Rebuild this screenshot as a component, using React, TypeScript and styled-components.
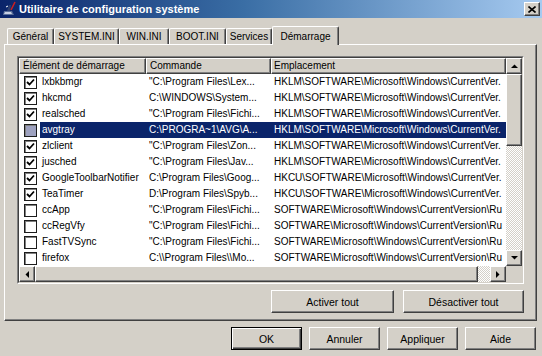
import React from "react";
import styled, { createGlobalStyle, css } from "styled-components";

const GlobalStyle = createGlobalStyle`
  html, body {
    margin: 0;
    padding: 0;
    background: #d4d0c8;
  }
  body {
    font-family: "Liberation Sans", Arial, sans-serif;
    font-size: 10px;
    color: #000;
  }
  * {
    box-sizing: border-box;
  }
`;

// classic 3D edges
const raised = css`
  border: 1px solid;
  border-color: #fff #404040 #404040 #fff;
  box-shadow: inset -1px -1px #808080;
  background: #d4d0c8;
`;

const dither = css`
  background-color: #fff;
  background-image: conic-gradient(
    #d4d0c8 25%,
    transparent 0 50%,
    #d4d0c8 0 75%,
    transparent 0
  );
  background-size: 2px 2px;
`;

const Window = styled.div`
  width: 542px;
  height: 356px;
  display: flex;
  flex-direction: column;
  background: #d4d0c8;
  overflow: hidden;
`;

const TitleBar = styled.div`
  height: 18px;
  display: flex;
  align-items: center;
  gap: 1px;
  padding: 0 2px 0 2px;
  background: linear-gradient(to right, #0a246a 0%, #3a6ea5 45%, #a6caf0 100%);
  color: #fff;
  font-weight: bold;
  font-size: 11px;
`;

const TitleText = styled.span`
  flex: 1;
  white-space: nowrap;
`;

const CloseButton = styled.div`
  ${raised};
  width: 16px;
  height: 14px;
  display: flex;
  align-items: center;
  justify-content: center;
`;

const Main = styled.div`
  flex: 1;
  display: flex;
  flex-direction: column;
  padding: 8px 5px 0 4px;
`;

const TabStrip = styled.div`
  height: 18px;
  display: flex;
  align-items: flex-end;
  padding-left: 3px;
  position: relative;
  z-index: 1;
`;

const Tab = styled.div<{ $width: number; $active?: boolean }>`
  width: ${({ $width }) => $width}px;
  height: ${({ $active }) => ($active ? 19 : 16)}px;
  margin-bottom: ${({ $active }) => ($active ? -1 : 0)}px;
  display: flex;
  justify-content: center;
  padding-top: ${({ $active }) => ($active ? 4 : 2)}px;
  background: #d4d0c8;
  border-top: 1px solid #fff;
  border-left: 1px solid #fff;
  border-right: 1px solid #404040;
  border-radius: 2px 2px 0 0;
  box-shadow: inset -1px 0 #808080;
  white-space: nowrap;
`;

const Panel = styled.div`
  height: 277px;
  display: flex;
  flex-direction: column;
  padding: 11px 12px 7px 12px;
  border: 1px solid;
  border-color: #fff #404040 #404040 #fff;
  box-shadow: inset -1px -1px #808080;
`;

const ListFrame = styled.div`
  height: 228px;
  border: 1px solid;
  border-color: #808080 #fff #fff #808080;
`;

const ListInner = styled.div`
  height: 100%;
  border: 1px solid;
  border-color: #404040 #d4d0c8 #d4d0c8 #404040;
  display: grid;
  grid-template-columns: 1fr 16px;
  grid-template-rows: 1fr 16px;
  background: #fff;
`;

const Table = styled.div`
  overflow: hidden;
  display: flex;
  flex-direction: column;
`;

const columns = "127px 125px 1fr";

const HeaderRow = styled.div`
  display: grid;
  grid-template-columns: ${columns};
  height: 16px;
`;

const HeaderCell = styled.div<{ $pad: number }>`
  ${raised};
  padding-left: ${({ $pad }) => $pad}px;
  line-height: 14px;
  white-space: nowrap;
  overflow: hidden;
`;

const Row = styled.div`
  display: grid;
  grid-template-columns: ${columns};
  height: 16px;
  line-height: 16px;
`;

const NameCell = styled.div`
  display: flex;
  align-items: center;
  padding-left: 5px;
  min-width: 0;
`;

const Label = styled.div<{ $selected?: boolean }>`
  flex: 1;
  height: 16px;
  margin-left: 3px;
  padding-left: 2px;
  white-space: nowrap;
  overflow: hidden;
  background: ${({ $selected }) => ($selected ? "#0a246a" : "transparent")};
  color: ${({ $selected }) => ($selected ? "#fff" : "#000")};
`;

const Cell = styled.div<{ $selected?: boolean }>`
  padding-left: 3px;
  white-space: nowrap;
  overflow: hidden;
  background: ${({ $selected }) => ($selected ? "#0a246a" : "transparent")};
  color: ${({ $selected }) => ($selected ? "#fff" : "#000")};
`;

const CheckBox = styled.div<{ $muted?: boolean }>`
  width: 13px;
  height: 13px;
  flex-shrink: 0;
  border: 1px solid #1c1c1c;
  box-shadow: inset 1px 1px #808080;
  background: ${({ $muted }) => ($muted ? "#9ea2c0" : "#fff")};
  display: flex;
  align-items: center;
  justify-content: center;
`;

const VScroll = styled.div`
  display: flex;
  flex-direction: column;
  ${dither};
`;

const HScroll = styled.div`
  display: flex;
  ${dither};
`;

const Track = styled.div`
  flex: 1;
`;

const ScrollButton = styled.div`
  ${raised};
  width: 16px;
  height: 16px;
  flex-shrink: 0;
  display: flex;
  align-items: center;
  justify-content: center;
`;

const Thumb = styled.div<{ $size: number; $vertical?: boolean }>`
  ${raised};
  flex-shrink: 0;
  ${({ $vertical, $size }) =>
    $vertical ? `height: ${$size}px;` : `width: ${$size}px;`}
`;

const Corner = styled.div`
  background: #d4d0c8;
`;

const ButtonRow = styled.div<{ $gap: number }>`
  display: flex;
  justify-content: flex-end;
  gap: ${({ $gap }) => $gap}px;
`;

const PanelButtons = styled(ButtonRow)`
  margin-top: 6px;
`;

const FooterButtons = styled(ButtonRow)`
  margin-top: 6px;
  padding-right: 1px;
`;

const Button = styled.button<{ $width: number; $default?: boolean }>`
  width: ${({ $width }) => $width}px;
  height: 23px;
  padding: 0;
  font: inherit;
  font-size: 10.5px;
  color: #000;
  background: #d4d0c8;
  border: 1px solid;
  border-color: ${({ $default }) =>
    $default ? "#000" : "#fff #404040 #404040 #fff"};
  box-shadow: ${({ $default }) =>
    $default
      ? "inset 1px 1px #fff, inset -1px -1px #404040, inset -2px -2px #808080"
      : "inset -1px -1px #808080"};
`;

const HKLM = "HKLM\\SOFTWARE\\Microsoft\\Windows\\CurrentVer.";
const HKCU = "HKCU\\SOFTWARE\\Microsoft\\Windows\\CurrentVer.";
const RUN = "SOFTWARE\\Microsoft\\Windows\\CurrentVersion\\Ru";
const FICHI = "\"C:\\Program Files\\Fichi...";

const items = [
  { name: "lxbkbmgr", cmd: "\"C:\\Program Files\\Lex...", loc: HKLM, on: true },
  { name: "hkcmd", cmd: "C:\\WINDOWS\\System...", loc: HKLM, on: true },
  { name: "realsched", cmd: FICHI, loc: HKLM, on: true },
  { name: "avgtray", cmd: "C:\\PROGRA~1\\AVG\\A...", loc: HKLM, on: false, selected: true },
  { name: "zlclient", cmd: "\"C:\\Program Files\\Zon...", loc: HKLM, on: true },
  { name: "jusched", cmd: "\"C:\\Program Files\\Jav...", loc: HKLM, on: true },
  { name: "GoogleToolbarNotifier", cmd: "C:\\Program Files\\Goog...", loc: HKCU, on: true },
  { name: "TeaTimer", cmd: "D:\\Program Files\\Spyb...", loc: HKCU, on: true },
  { name: "ccApp", cmd: FICHI, loc: RUN, on: false },
  { name: "ccRegVfy", cmd: FICHI, loc: RUN, on: false },
  { name: "FastTVSync", cmd: FICHI, loc: RUN, on: false },
  { name: "firefox", cmd: "C:\\\\Program Files\\\\Mo...", loc: RUN, on: false },
];

const tabs = [
  { label: "Général", width: 47 },
  { label: "SYSTEM.INI", width: 65 },
  { label: "WIN.INI", width: 50 },
  { label: "BOOT.INI", width: 57 },
  { label: "Services", width: 46 },
  { label: "Démarrage", width: 67, active: true },
];

const Arrow = ({ dir }: { dir: "up" | "down" | "left" | "right" }) => {
  const pts = {
    up: "0,4 7,4 3.5,0.5",
    down: "0,0 7,0 3.5,3.5",
    left: "4,0 4,7 0.5,3.5",
    right: "0,0 0,7 3.5,3.5",
  }[dir];
  const vertical = dir === "up" || dir === "down";
  return (
    <svg width={vertical ? 7 : 4} height={vertical ? 4 : 7}>
      <polygon points={pts} fill="#000" />
    </svg>
  );
};

const Check = () => (
  <svg width="9" height="9" viewBox="0 0 9 9">
    <path d="M1 4 L3.5 6.5 L8 1.5" stroke="#000" strokeWidth="1.8" fill="none" />
  </svg>
);

const AppIcon = () => (
  <svg width="16" height="16" viewBox="0 0 16 16">
    <path d="M2 10 L10 10 L12 14 L1 14 Z" fill="#5a6f9a" />
    <path d="M3 11 L9 11 L10 13 L2 13 Z" fill="#c8d0e4" />
    <path d="M5 10 L7 4 L9 4 L8 10 Z" fill="#2c3f70" />
    <path d="M9 9 L13 1" stroke="#d02020" strokeWidth="1.6" />
    <path d="M4 6 L6 5" stroke="#fff" strokeWidth="1" />
  </svg>
);

const CloseGlyph = () => (
  <svg width="8" height="7" viewBox="0 0 8 7">
    <path d="M0.5 0.5 L7.5 6.5 M7.5 0.5 L0.5 6.5" stroke="#000" strokeWidth="1.6" />
  </svg>
);

export default function App() {
  return (
    <>
      <GlobalStyle />
      <Window>
        <TitleBar>
          <AppIcon />
          <TitleText>Utilitaire de configuration système</TitleText>
          <CloseButton>
            <CloseGlyph />
          </CloseButton>
        </TitleBar>

        <Main>
          <TabStrip>
            {tabs.map((t) => (
              <Tab key={t.label} $width={t.width} $active={t.active}>
                {t.label}
              </Tab>
            ))}
          </TabStrip>

          <Panel>
            <ListFrame>
              <ListInner>
                <Table>
                  <HeaderRow>
                    <HeaderCell $pad={3}>Élément de démarrage</HeaderCell>
                    <HeaderCell $pad={3}>Commande</HeaderCell>
                    <HeaderCell $pad={2}>Emplacement</HeaderCell>
                  </HeaderRow>
                  {items.map((it) => (
                    <Row key={it.name}>
                      <NameCell>
                        <CheckBox $muted={it.selected}>{it.on && <Check />}</CheckBox>
                        <Label $selected={it.selected}>{it.name}</Label>
                      </NameCell>
                      <Cell $selected={it.selected}>{it.cmd}</Cell>
                      <Cell $selected={it.selected}>{it.loc}</Cell>
                    </Row>
                  ))}
                </Table>

                <VScroll>
                  <ScrollButton>
                    <Arrow dir="up" />
                  </ScrollButton>
                  <Thumb $vertical $size={72} />
                  <Track />
                  <ScrollButton>
                    <Arrow dir="down" />
                  </ScrollButton>
                </VScroll>

                <HScroll>
                  <ScrollButton>
                    <Arrow dir="left" />
                  </ScrollButton>
                  <Thumb $size={443} />
                  <Track />
                  <ScrollButton>
                    <Arrow dir="right" />
                  </ScrollButton>
                </HScroll>
                <Corner />
              </ListInner>
            </ListFrame>

            <PanelButtons $gap={9}>
              <Button $width={123}>Activer tout</Button>
              <Button $width={121}>Désactiver tout</Button>
            </PanelButtons>
          </Panel>

          <FooterButtons $gap={7}>
            <Button $width={71} $default>
              OK
            </Button>
            <Button $width={71}>Annuler</Button>
            <Button $width={71}>Appliquer</Button>
            <Button $width={71}>Aide</Button>
          </FooterButtons>
        </Main>
      </Window>
    </>
  );
}
